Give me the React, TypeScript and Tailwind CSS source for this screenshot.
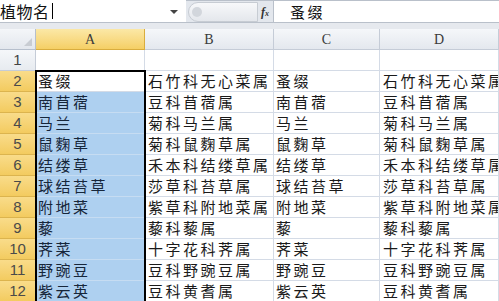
import React from 'react';

const rows: [string, string, string, string][] = [
  ['蚤缀', '石竹科无心菜属', '蚤缀', '石竹科无心菜属'],
  ['南苜蓿', '豆科苜蓿属', '南苜蓿', '豆科苜蓿属'],
  ['马兰', '菊科马兰属', '马兰', '菊科马兰属'],
  ['鼠麴草', '菊科鼠麴草属', '鼠麴草', '菊科鼠麴草属'],
  ['结缕草', '禾本科结缕草属', '结缕草', '禾本科结缕草属'],
  ['球结苔草', '莎草科苔草属', '球结苔草', '莎草科苔草属'],
  ['附地菜', '紫草科附地菜属', '附地菜', '紫草科附地菜属'],
  ['藜', '藜科藜属', '藜', '藜科藜属'],
  ['荠菜', '十字花科荠属', '荠菜', '十字花科荠属'],
  ['野豌豆', '豆科野豌豆属', '野豌豆', '豆科野豌豆属'],
  ['紫云英', '豆科黄耆属', '紫云英', '豆科黄耆属'],
];

const cjk = { fontFamily: '"Noto Sans CJK SC", "Noto Sans", sans-serif' };

function Cell({ text, className = '' }: { text: string; className?: string }) {
  return (
    <div
      className={`h-[21px] border-b border-r border-[#d4dbe6] flex items-center pl-[2px] overflow-hidden whitespace-nowrap text-[15px] leading-[18px] tracking-[2.5px] text-[#1a1a1a] ${className}`}
      style={cjk}
    >
      {text}
    </div>
  );
}

export default function App() {
  return (
    <div className="w-[499px] h-[301px] overflow-hidden bg-white">
      {/* formula bar */}
      <div className="flex h-[22px]">
        <div className="w-[186px] bg-white flex items-center relative">
          <span className="text-[16px] leading-[18px] tracking-[0.5px] text-[#111]" style={cjk}>植物名</span>
          <span className="ml-[2px] w-px h-[16px] bg-black" />
          <span className="absolute left-[170px] top-[10px] w-0 h-0 border-l-[4px] border-r-[4px] border-t-[4px] border-l-transparent border-r-transparent border-t-[#444]" />
        </div>
        <div className="w-[87px] bg-[#e3e7ed] flex items-center border-t border-[#b9c0ca]">
          <div className="ml-[2px] h-[20px] w-[70px] rounded-l-full border border-[#c7ccd3] bg-gradient-to-b from-[#f7f8fa] to-[#e4e7ec] flex items-center">
            <span className="ml-[3px] w-[10px] h-[10px] rounded-full bg-[#d2d6dc]" />
          </div>
          <span className="ml-auto mr-[4px] italic font-bold text-[12px] text-[#333]" style={{ fontFamily: '"Liberation Serif", serif' }}>
            f<span className="text-[8px]">x</span>
          </span>
        </div>
        <div className="flex-1 bg-white flex items-center pl-[16px] border-t border-l border-[#b9c0ca]">
          <span className="text-[15px] leading-[18px] tracking-[2.5px] text-[#111]" style={cjk}>蚤缀</span>
        </div>
      </div>
      <div className="h-[7px] bg-[#e6e9ee] border-t border-[#b9c0ca]" />

      {/* sheet */}
      <div className="relative grid grid-cols-[36px_109px_129px_106px_1fr]">
        {/* header row */}
        <div className="h-[21px] border-b border-r border-[#b6bfcc] bg-gradient-to-b from-[#f4f6f9] to-[#e3e7ed] relative">
          <span className="absolute right-[3px] bottom-[3px] w-0 h-0 border-b-[8px] border-l-[8px] border-b-[#c8ccd2] border-l-transparent" />
        </div>
        <div className="h-[21px] border-b border-r border-[#d9ad3e] bg-gradient-to-b from-[#fbe8a6] to-[#f5cf64] flex items-center justify-center text-[14px] text-[#3a3a3a]" style={{ fontFamily: '"Liberation Serif", serif' }}>A</div>
        {['B', 'C', 'D'].map((c) => (
          <div key={c} className="h-[21px] border-b border-r border-[#c5ccd7] bg-gradient-to-b from-[#f5f7fa] to-[#e4e8ee] flex items-center justify-center text-[14px] text-[#3a3a3a]" style={{ fontFamily: '"Liberation Serif", serif' }}>{c}</div>
        ))}

        {/* row 1 */}
        <div className="h-[21px] border-b border-r border-[#c5ccd7] bg-gradient-to-b from-[#f5f7fa] to-[#e7ebf0] flex items-center justify-center text-[15px] text-[#444]" style={{ fontFamily: '"Liberation Sans", sans-serif' }}>1</div>
        <Cell text="" />
        <Cell text="" />
        <Cell text="" />
        <Cell text="" />

        {rows.map((r, i) => (
          <React.Fragment key={i}>
            <div className="h-[21px] border-b border-r border-[#dcb44e] bg-gradient-to-b from-[#f9dc8a] to-[#f3cb5f] flex items-center justify-center text-[15px] text-[#4a4a4a]" style={{ fontFamily: '"Liberation Sans", sans-serif' }}>{i + 2}</div>
            <Cell text={r[0]} className={i === 0 ? 'bg-white' : 'bg-[#aed0f0] border-b-[#c6dcf2] text-[#16263a]'} />
            <Cell text={r[1]} className="pl-[3px]" />
            <Cell text={r[2]} className="pl-[2px]" />
            <Cell text={r[3]} className="pl-[3px]" />
          </React.Fragment>
        ))}

        {/* selection outline A2:A12 */}
        <div className="absolute left-[35px] top-[41px] w-[111px] h-[240px] border-2 border-black pointer-events-none" />
      </div>
    </div>
  );
}
